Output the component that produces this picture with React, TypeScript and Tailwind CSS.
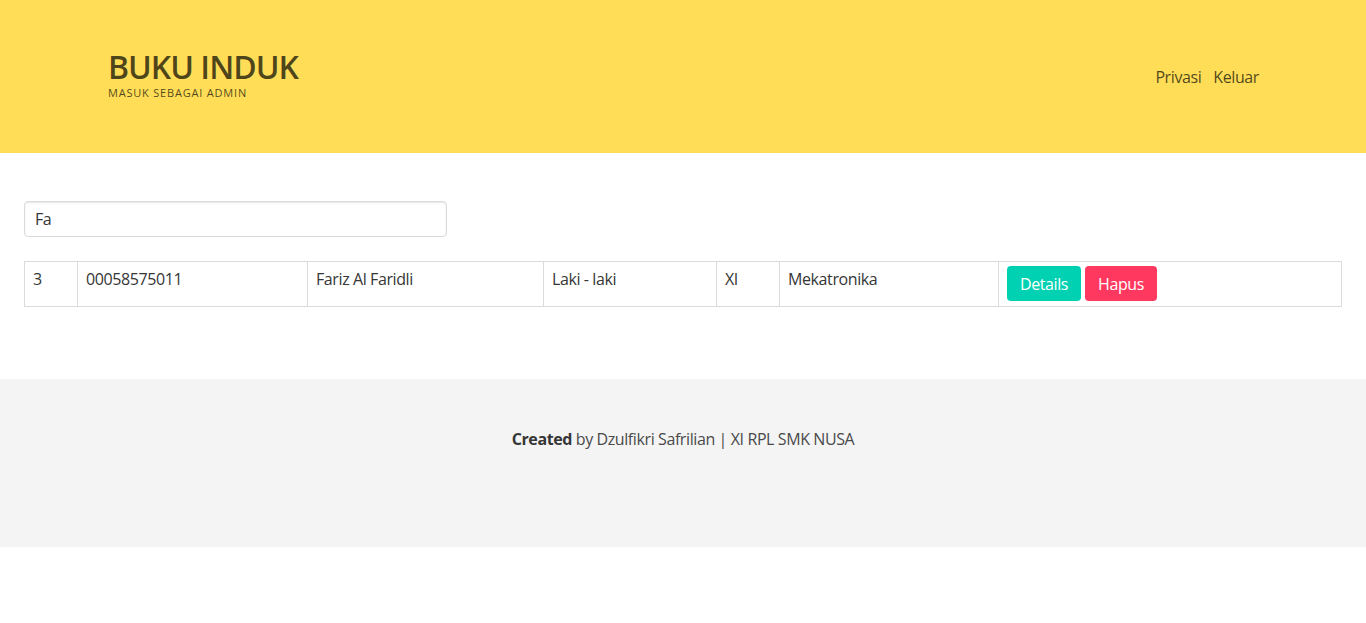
const siswa = [
  {
    no: 3,
    nis: '00058575011',
    nama: 'Fariz Al Faridli',
    jk: 'Laki - laki',
    kelas: 'XI',
    jurusan: 'Mekatronika'
  }
]

export default function App() {
  return (
    <div
      className="min-h-[623px] bg-white text-[#363636] text-[16px] tracking-[-0.4px]"
      style={{ fontFamily: '"Open Sans", sans-serif' }}
    >
      <header className="h-[153px] bg-[#ffdd57] flex items-center justify-between pl-[108px] pr-[107px]">
        <div className="flex flex-col -mt-[3px]">
          <h1 className="text-[32px] leading-8 font-semibold tracking-[-1px] text-black/70">BUKU INDUK</h1>
          <span className="mt-[4px] text-[11px] leading-[12px] tracking-[0.8px] text-black/70">MASUK SEBAGAI ADMIN</span>
        </div>
        <nav className="flex gap-3 text-black/70">
          <a>Privasi</a>
          <a>Keluar</a>
        </nav>
      </header>

      <section className="px-6 pt-12 pb-[72px]">
        <input
          className="w-[423px] h-9 px-[10px] border border-[#dbdbdb] rounded shadow-[inset_0_1px_2px_rgba(10,10,10,0.1)] outline-none text-[#363636]"
          defaultValue="Fa"
        />
        <table className="mt-6 w-full border-collapse">
          <tbody>
            {siswa.map((s) => (
              <tr key={s.no}>
                <td className="w-[53px] border border-[#dbdbdb] px-2 pt-[5px] align-top leading-6">{s.no}</td>
                <td className="w-[230px] border border-[#dbdbdb] px-2 pt-[5px] align-top leading-6">{s.nis}</td>
                <td className="w-[236px] border border-[#dbdbdb] px-2 pt-[5px] align-top leading-6">{s.nama}</td>
                <td className="w-[173px] border border-[#dbdbdb] px-2 pt-[5px] align-top leading-6">{s.jk}</td>
                <td className="w-[63px] border border-[#dbdbdb] px-2 pt-[5px] align-top leading-6">{s.kelas}</td>
                <td className="w-[219px] border border-[#dbdbdb] px-2 pt-[5px] align-top leading-6">{s.jurusan}</td>
                <td className="border border-[#dbdbdb] px-2 pt-1 pb-[5px] align-top">
                  <div className="flex gap-1">
                    <button className="h-[35px] px-[13px] rounded-[4px] bg-[#00d1b2] text-white">Details</button>
                    <button className="h-[35px] px-[13px] rounded-[4px] bg-[#ff3860] text-white">Hapus</button>
                  </div>
                </td>
              </tr>
            ))}
          </tbody>
        </table>
      </section>

      <footer className="h-[168px] bg-[#f4f4f4] pt-12 text-center">
        <p className="leading-6 text-[#4a4a4a]">
          <strong className="font-bold text-[#363636]">Created</strong> by Dzulfikri Safrilian | XI RPL SMK NUSA
        </p>
      </footer>
    </div>
  )
}
